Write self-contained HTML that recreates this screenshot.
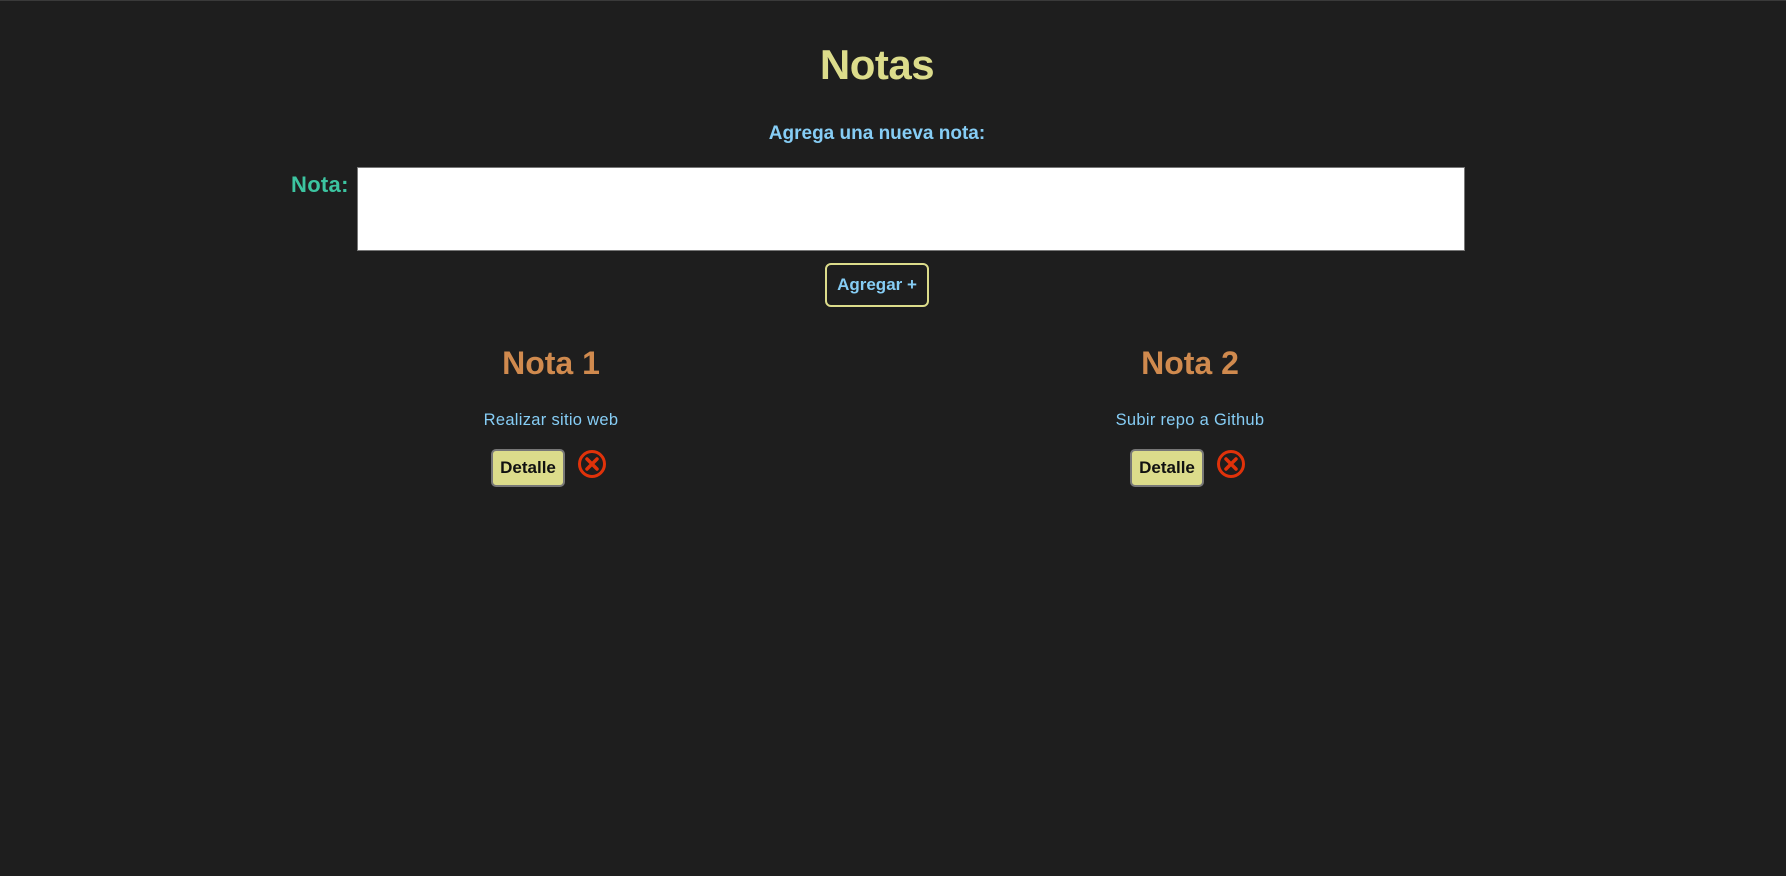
<!DOCTYPE html>
<html><head><meta charset="utf-8"><style>
html,body{margin:0;padding:0;}
body{width:1786px;height:876px;background:#1e1e1e;position:relative;overflow:hidden;font-family:"Liberation Sans",sans-serif;border-top:1px solid #3a3a3a;box-sizing:border-box;}
.a{position:absolute;white-space:nowrap;}
h1{position:absolute;left:0;width:1754px;text-align:center;top:40px;margin:0;font-size:42px;color:#dcdc8b;font-weight:bold;letter-spacing:-0.5px;}
.sub{left:0;width:1754px;text-align:center;top:122px;font-size:19px;font-weight:bold;color:#86cdf5;}
.lbl{left:291px;top:171px;font-size:22px;font-weight:bold;color:#3cc4a0;letter-spacing:0.3px;}
.ta{left:357px;top:166px;width:1108px;height:84px;background:#fff;border:1px solid #777;box-sizing:border-box;}
.btn{left:825px;top:262px;width:104px;height:44px;border:2px solid #dcdc8b;border-radius:6px;box-sizing:border-box;color:#86cdf5;font-weight:bold;font-size:17px;text-align:center;line-height:40px;}
.nh{font-size:32px;font-weight:bold;color:#d08a4e;text-align:center;width:300px;top:344px;}
.nt{font-size:16.5px;color:#86cdf5;text-align:center;width:300px;top:410px;letter-spacing:0.3px;}
.det{width:74px;height:38px;top:448px;background:#dcdc8b;border:2px solid #777;border-radius:5px;box-sizing:border-box;font-size:17px;font-weight:bold;color:#111;text-align:center;line-height:34px;}
</style></head><body>
<h1>Notas</h1>
<div class="a sub">Agrega una nueva nota:</div>
<div class="a lbl">Nota:</div>
<div class="a ta"></div>
<div class="a btn">Agregar +</div>

<div class="a nh" style="left:401px">Nota 1</div>
<div class="a nt" style="left:401px">Realizar sitio web</div>
<div class="a det" style="left:491px">Detalle</div>
<svg class="a" style="left:577px;top:448px" width="30" height="30" viewBox="0 0 30 30"><circle cx="15" cy="15" r="12.5" fill="none" stroke="#e0320a" stroke-width="3"/><path d="M10 10L20 20M20 10L10 20" stroke="#e0320a" stroke-width="3.5" stroke-linecap="round"/></svg>

<div class="a nh" style="left:1040px">Nota 2</div>
<div class="a nt" style="left:1040px">Subir repo a Github</div>
<div class="a det" style="left:1130px">Detalle</div>
<svg class="a" style="left:1216px;top:448px" width="30" height="30" viewBox="0 0 30 30"><circle cx="15" cy="15" r="12.5" fill="none" stroke="#e0320a" stroke-width="3"/><path d="M10 10L20 20M20 10L10 20" stroke="#e0320a" stroke-width="3.5" stroke-linecap="round"/></svg>
</body></html>
